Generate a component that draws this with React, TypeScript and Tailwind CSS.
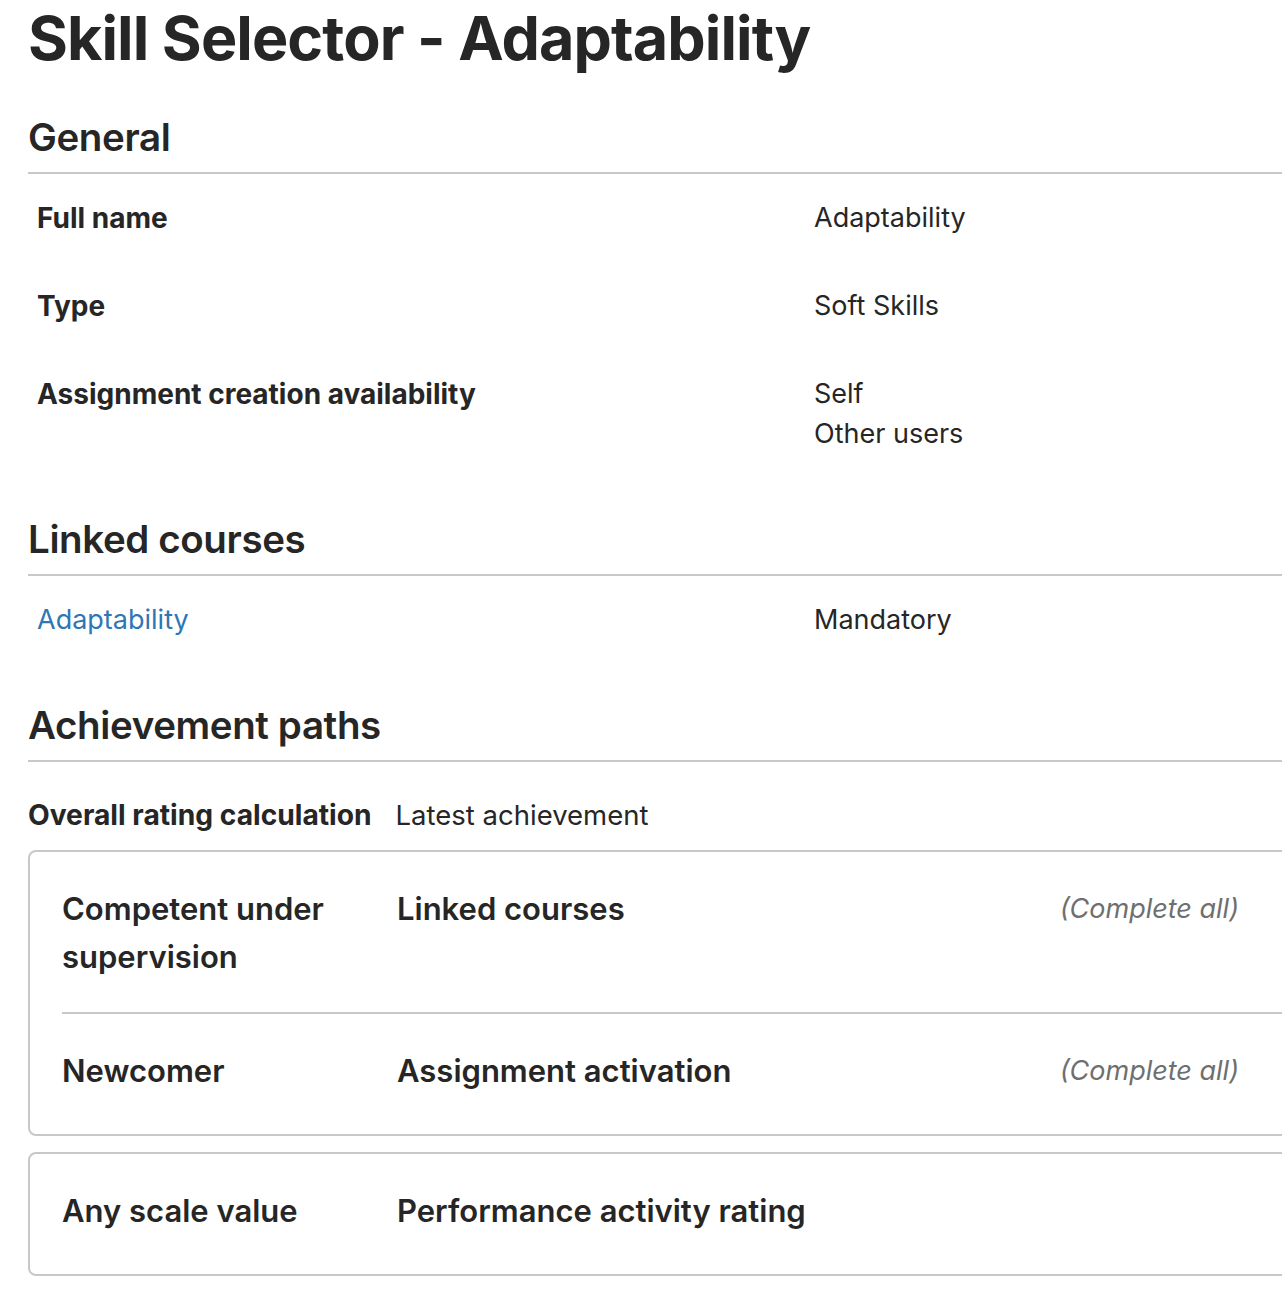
import React from 'react';

const generalRows: { label: string; values: string[] }[] = [
  { label: 'Full name', values: ['Adaptability'] },
  { label: 'Type', values: ['Soft Skills'] },
  { label: 'Assignment creation availability', values: ['Self', 'Other users'] },
];

type PathRow = { scale: string; criterion: string; note?: string };

const pathGroups: PathRow[][] = [
  [
    { scale: 'Competent under supervision', criterion: 'Linked courses', note: '(Complete all)' },
    { scale: 'Newcomer', criterion: 'Assignment activation', note: '(Complete all)' },
  ],
  [{ scale: 'Any scale value', criterion: 'Performance activity rating' }],
];

function SectionHeading({ children, className = '' }: { children: React.ReactNode; className?: string }) {
  return (
    <div className={className}>
      <h2 className="text-[38.5px] font-semibold leading-[48px] tracking-[-0.01em] text-[#262626]">{children}</h2>
      <div className="mt-[11px] h-[2px] bg-[#c8c8c8]" />
    </div>
  );
}

export default function App() {
  return (
    <div className="w-full overflow-hidden bg-white" style={{ fontFamily: 'Inter, "Noto Sans", sans-serif' }}>
      <main className="w-[1330px] pl-[28px] pb-[40px] text-[#262626]">
        <h1 className="text-[61px] font-bold leading-[76px] tracking-[-0.015em]">Skill Selector - Adaptability</h1>

        <SectionHeading className="mt-[37px]">General</SectionHeading>
        <div>
          {generalRows.map((row) => (
            <div key={row.label} className="grid grid-cols-[786px_1fr] py-[24px] text-[27px] leading-[40px]">
              <div className="pl-[9px] text-[28px] font-bold">{row.label}</div>
              <div>
                {row.values.map((v) => (
                  <p key={v}>{v}</p>
                ))}
              </div>
            </div>
          ))}
        </div>

        <SectionHeading className="mt-[37px]">Linked courses</SectionHeading>
        <div className="grid grid-cols-[786px_1fr] py-[24px] text-[27px] leading-[40px]">
          <a href="#" className="pl-[9px] text-[#2f76b5]">Adaptability</a>
          <div>Mandatory</div>
        </div>

        <SectionHeading className="mt-[37px]">Achievement paths</SectionHeading>
        <div className="mt-[33px] flex gap-[24px] text-[27.5px] leading-[40px]">
          <span className="text-[28.2px] font-bold">Overall rating calculation</span>
          <span>Latest achievement</span>
        </div>

        <div className="mt-[15px] flex flex-col gap-[16px]">
          {pathGroups.map((group, gi) => (
            <div key={gi} className="rounded-[8px] border-2 border-[#c8c8c8] pb-[8px] pl-[32px]">
              {group.map((row, ri) => (
                <div
                  key={row.scale}
                  className={`grid grid-cols-[335px_1fr_auto] pt-[33px] pb-[31px] pr-[89px] text-[31px] leading-[48px] ${
                    ri < group.length - 1 ? 'border-b-2 border-[#c8c8c8]' : ''
                  }`}
                >
                  <div className="pr-[20px] font-semibold">{row.scale}</div>
                  <div className="font-semibold">{row.criterion}</div>
                  <div className="text-[27px] italic text-[#6f6f6f]">{row.note}</div>
                </div>
              ))}
            </div>
          ))}
        </div>
      </main>
    </div>
  );
}
